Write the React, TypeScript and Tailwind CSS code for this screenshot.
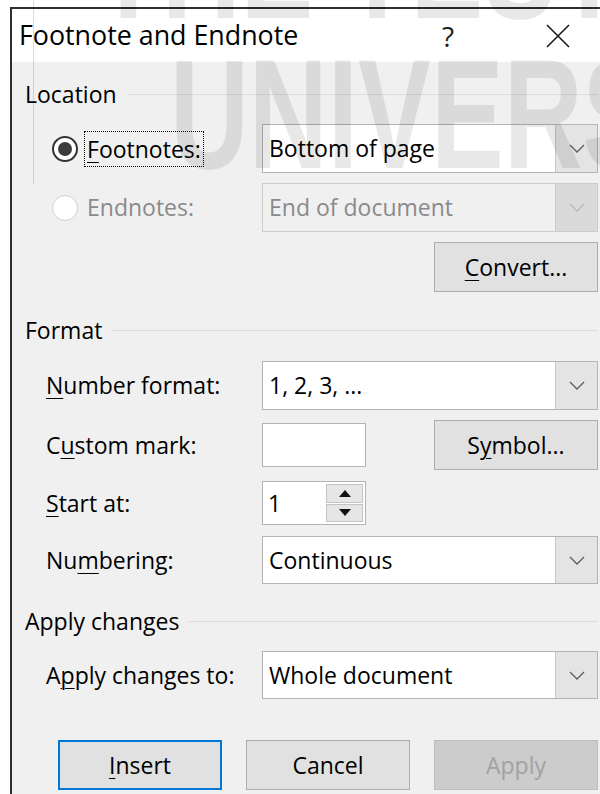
import { clsx as cn } from "clsx";
import type { ReactNode } from "react";

const FONT = "font-['Open_Sans','Noto_Sans',sans-serif]";

function Chevron({ disabled }: { disabled?: boolean }) {
  return (
    <svg width="16" height="9" viewBox="0 0 16 9" fill="none">
      <polyline
        points="1,1 8,8 15,1"
        stroke={disabled ? "#b8b8b8" : "#5c5c5c"}
        strokeWidth="1.3"
      />
    </svg>
  );
}

function Key({ children }: { children: ReactNode }) {
  return <span className="underline decoration-1 underline-offset-[4px]">{children}</span>;
}

function SectionHeader({ title }: { title: string }) {
  return (
    <div className="flex h-[28px] items-center pl-[13px]">
      <span>{title}</span>
      <div className="ml-[10px] h-px flex-1 bg-[#dcdcdc]" />
    </div>
  );
}

function Combo({ value, disabled, h = "h-[49px]" }: { value: string; disabled?: boolean; h?: string }) {
  return (
    <div
      className={cn(
        "flex flex-1 items-stretch border",
        h,
        disabled ? "border-[#cccccc] bg-[#f0f0f0] text-[#8a8a8a]" : "border-[#b4b4b4] bg-white text-black",
      )}
    >
      <span className="flex flex-1 items-center pl-[6px]">{value}</span>
      <span
        className={cn(
          "flex w-[42px] items-center justify-center border-l",
          disabled ? "border-[#cccccc] bg-[#dadada]" : "border-[#c6c6c6] bg-[#e4e4e4]",
        )}
      >
        <Chevron disabled={disabled} />
      </span>
    </div>
  );
}

function Button({
  children,
  variant = "normal",
  className,
}: {
  children: ReactNode;
  variant?: "normal" | "default" | "disabled";
  className?: string;
}) {
  return (
    <div
      className={cn(
        "flex h-[50px] w-[164px] items-center justify-center",
        variant === "default" && "border-2 border-[#0078d7] bg-[#e1e1e1] text-black",
        variant === "normal" && "border border-[#adadad] bg-[#e1e1e1] text-black",
        variant === "disabled" && "border border-[#bfbfbf] bg-[#cccccc] text-[#a2a2a2]",
        className,
      )}
    >
      {children}
    </div>
  );
}

function Row({ label, children, className }: { label: ReactNode; children: ReactNode; className?: string }) {
  return (
    <div className={cn("flex items-center", className)}>
      <div className="w-[250px] pl-[34px]">{label}</div>
      {children}
    </div>
  );
}

function Watermark() {
  return (
    <div className="pointer-events-none absolute inset-0 overflow-hidden font-['Liberation_Sans',sans-serif] font-bold text-black/[0.09]">
      <div className="absolute left-[33px] top-0 h-[184px] w-px bg-black/[0.14]" />
      <div className="absolute left-[95px] top-[-114px] origin-left scale-x-[0.7] whitespace-nowrap text-[156px] leading-none">
        THE TEST
      </div>
      <div className="absolute left-[170px] top-[36px] origin-left scale-x-[0.7] whitespace-nowrap text-[156px] leading-none">
        UNIVERSITY
      </div>
    </div>
  );
}

export default function App() {
  return (
    <div className={cn("relative h-[794px] w-[600px] overflow-hidden bg-white text-[23px] text-black", FONT)}>
      <div className="ml-[10px] mt-[7px] flex h-[787px] flex-col border-l-2 border-t-2 border-[#2e2e2e]">
        {/* title bar */}
        <div className="flex h-[53px] items-center bg-white pl-[7px]">
          <span className="text-[26.8px]">Footnote and Endnote</span>
          <span className="ml-auto flex w-[46px] justify-center text-[28px] text-[#222]">?</span>
          <span className="ml-[64px] mr-[19px] flex w-[46px] justify-center">
            <svg width="24" height="24" viewBox="0 0 24 24">
              <path d="M1 1 L23 23 M23 1 L1 23" stroke="#1a1a1a" strokeWidth="1.6" />
            </svg>
          </span>
        </div>

        <div className="flex-1 bg-[#f0f0f0] pr-[2px] pt-[18px]">
          <SectionHeader title="Location" />

          <div className="mt-[16px] flex h-[49px] items-center">
            <div className="flex w-[250px] items-center pl-[40px]">
              <div className="flex h-[26px] w-[26px] items-center justify-center rounded-full border-2 border-[#333] bg-white">
                <div className="h-[14px] w-[14px] rounded-full bg-[#3c3c3c]" />
              </div>
              <span className="ml-[6px] border border-dotted border-black px-[2px] leading-[34px]">
                <Key>F</Key>ootnotes:
              </span>
            </div>
            <Combo value="Bottom of page" />
          </div>

          <div className="mt-[10px] flex h-[49px] items-center">
            <div className="flex w-[250px] items-center pl-[40px] text-[#8a8a8a]">
              <div className="h-[26px] w-[26px] rounded-full border border-[#cfcfcf] bg-white" />
              <span className="ml-[9px]">Endnotes:</span>
            </div>
            <Combo value="End of document" disabled />
          </div>

          <div className="mt-[10px] flex justify-end">
            <Button>
              <span>
                <Key>C</Key>onvert...
              </span>
            </Button>
          </div>

          <div className="mt-[24px]">
            <SectionHeader title="Format" />
          </div>

          <Row
            className="mt-[17px]"
            label={
              <span>
                <Key>N</Key>umber format:
              </span>
            }
          >
            <Combo value="1, 2, 3, ..." />
          </Row>

          <Row
            className="mt-[11px] h-[48px]"
            label={
              <span>
                C<Key>u</Key>stom mark:
              </span>
            }
          >
            <div className="h-[44px] w-[104px] border border-[#b4b4b4] bg-white" />
            <Button className="ml-auto h-[48px]">
              <span>
                S<Key>y</Key>mbol...
              </span>
            </Button>
          </Row>

          <Row
            className="mt-[12px]"
            label={
              <span>
                <Key>S</Key>tart at:
              </span>
            }
          >
            <div className="flex h-[44px] w-[104px] border border-[#b4b4b4] bg-white">
              <span className="flex flex-1 items-center pl-[5px]">1</span>
              <div className="my-[2px] mr-[2px] flex w-[37px] flex-col gap-px">
                <div className="flex flex-1 items-center justify-center border border-[#c4c4c4] bg-[#e6e6e6]">
                  <svg width="12" height="7" viewBox="0 0 12 7">
                    <polygon points="6,0 12,7 0,7" fill="#111" />
                  </svg>
                </div>
                <div className="flex flex-1 items-center justify-center border border-[#c4c4c4] bg-[#e6e6e6]">
                  <svg width="12" height="7" viewBox="0 0 12 7">
                    <polygon points="0,0 12,0 6,7" fill="#111" />
                  </svg>
                </div>
              </div>
            </div>
          </Row>

          <Row
            className="mt-[11px]"
            label={
              <span>
                Nu<Key>m</Key>bering:
              </span>
            }
          >
            <Combo value="Continuous" h="h-[48px]" />
          </Row>

          <div className="mt-[23px]">
            <SectionHeader title="Apply changes" />
          </div>

          <Row
            className="mt-[16px]"
            label={
              <span>
                A<Key>p</Key>ply changes to:
              </span>
            }
          >
            <Combo value="Whole document" h="h-[48px]" />
          </Row>

          <div className="mt-[41px] flex gap-[24px] pl-[46px]">
            <Button variant="default">
              <span>
                <Key>I</Key>nsert
              </span>
            </Button>
            <Button>Cancel</Button>
            <Button variant="disabled">Apply</Button>
          </div>
        </div>
      </div>
      <Watermark />
    </div>
  );
}
